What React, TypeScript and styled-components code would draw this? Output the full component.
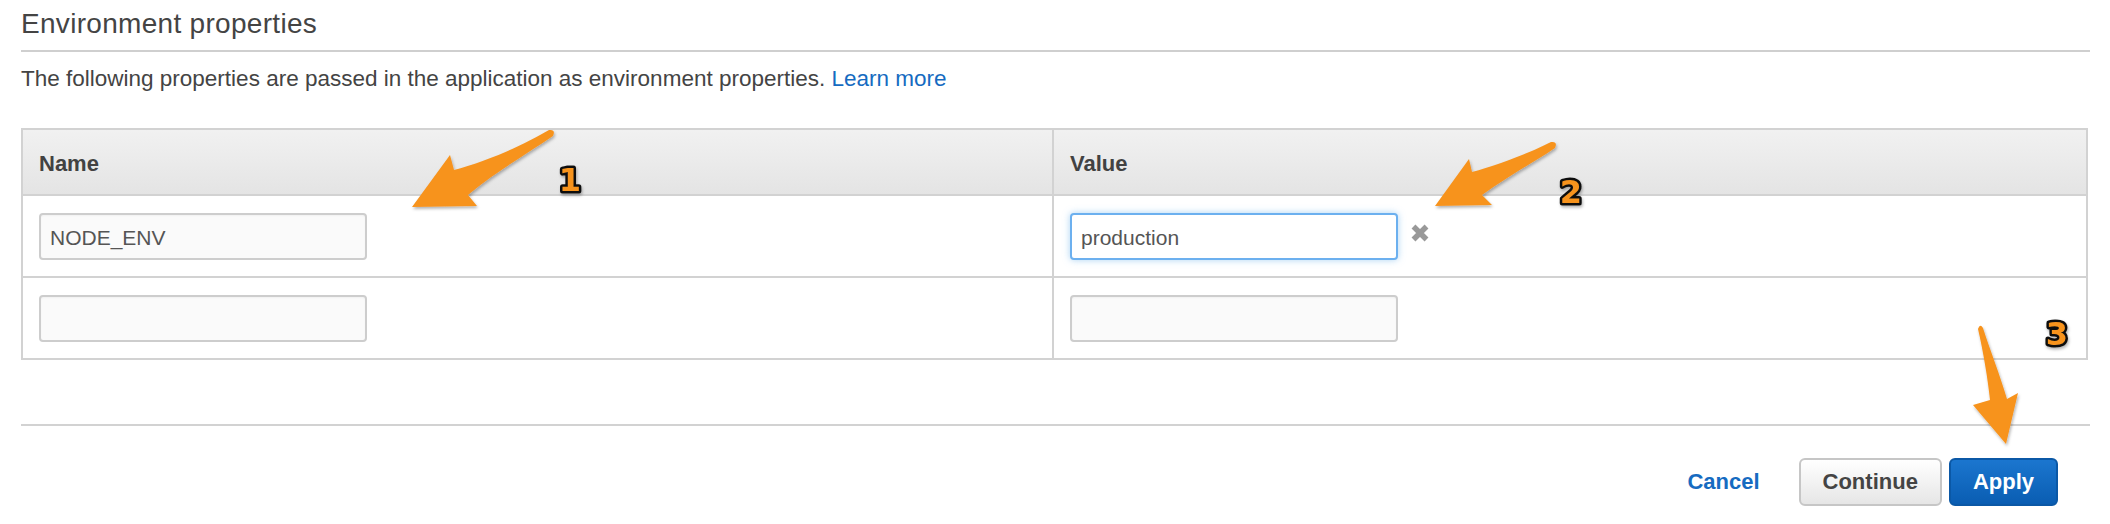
import * as React from "react";
import styled, { createGlobalStyle } from "styled-components";

const GlobalStyle = createGlobalStyle`
  html, body {
    margin: 0;
    padding: 0;
    background: #ffffff;
  }
  body {
    font-family: "Liberation Sans", Arial, Helvetica, sans-serif;
    color: #444444;
  }
  * {
    box-sizing: border-box;
  }
`;

const S = {
  Page: styled.div`
    position: relative;
    width: 2110px;
    height: 524px;
    padding: 0 20px 0 21px;
    overflow: hidden;
  `,
  Title: styled.h2`
    margin: 0;
    padding: 6px 0 8px;
    font-size: 28px;
    font-weight: 400;
    line-height: 36px;
    letter-spacing: 0.3px;
    color: #444444;
    border-bottom: 2px solid #cfcfcf;
  `,
  Description: styled.p`
    margin: 12px 0 0;
    font-size: 22.5px;
    line-height: 30px;
    color: #444444;
  `,
  Link: styled.a`
    color: #166bc1;
    text-decoration: none;
  `,
  Table: styled.div`
    display: grid;
    grid-template-columns: 1029px 1fr;
    margin: 34px 2px 0 0;
    border: 2px solid #d2d2d2;
  `,
  HeadCell: styled.div<{ $divider?: boolean }>`
    display: flex;
    align-items: center;
    height: 64px;
    padding: 3px 0 0 16px;
    background: linear-gradient(#f1f1f1, #e4e4e4);
    border-left: ${(p) => (p.$divider ? "2px solid #d2d2d2" : "none")};
    font-size: 22px;
    font-weight: 700;
    color: #424242;
  `,
  Cell: styled.div<{ $divider?: boolean }>`
    display: flex;
    align-items: center;
    height: 82px;
    padding: 1px 0 0 16px;
    border-top: 2px solid #d2d2d2;
    border-left: ${(p) => (p.$divider ? "2px solid #d2d2d2" : "none")};
  `,
  TextInput: styled.input<{ $focused?: boolean }>`
    width: 328px;
    height: 47px;
    padding: 2px 9px 0;
    border: 2px solid ${(p) => (p.$focused ? "#6cb0ef" : "#cdcdcd")};
    border-radius: 4px;
    background: ${(p) => (p.$focused ? "#ffffff" : "#fafafa")};
    box-shadow: ${(p) =>
      p.$focused
        ? "0 0 7px rgba(102, 175, 233, 0.55)"
        : "inset 0 1px 2px rgba(0, 0, 0, 0.04)"};
    font-family: "Liberation Sans", Arial, Helvetica, sans-serif;
    font-size: 21px;
    color: #555555;
    outline: none;
  `,
  Remove: styled.svg`
    width: 22px;
    height: 22px;
    margin: 0 0 8px 11px;
  `,
  Divider: styled.hr`
    margin: 64px 0 0;
    border: none;
    border-top: 2px solid #d2d2d2;
  `,
  Actions: styled.div`
    display: flex;
    justify-content: flex-end;
    align-items: center;
    padding: 32px 32px 0 0;
  `,
  LinkButton: styled.a`
    margin-right: 32px;
    font-size: 22px;
    font-weight: 700;
    color: #166bc1;
    text-decoration: none;
  `,
  Button: styled.button<{ $primary?: boolean }>`
    height: 48px;
    padding: 0 22px;
    margin-left: 7px;
    border-radius: 6px;
    border: 2px solid ${(p) => (p.$primary ? "#0b58a6" : "#c6c6c6")};
    background: ${(p) =>
      p.$primary
        ? "linear-gradient(#1b76cf, #0a5db2)"
        : "linear-gradient(#ffffff, #e6e6e6)"};
    font-family: "Liberation Sans", Arial, Helvetica, sans-serif;
    font-size: 22px;
    font-weight: 700;
    color: ${(p) => (p.$primary ? "#ffffff" : "#444444")};
  `,
  Annotations: styled.svg`
    position: absolute;
    top: 0;
    left: 0;
    width: 2110px;
    height: 524px;
    pointer-events: none;
  `,
};

const ORANGE = "#f7931e";

const arrows = [
  // 1 — points at the name input
  "M412 207 L450 155 L454 170 C480 163 515 150 549 130 Q556 129 553 136 C530 152 495 172 468 195 L477 206 Z",
  // 2 — points at the remove icon
  "M1435 206 L1469 159 L1472 172 C1495 166 1525 155 1551 142 Q1558 141 1555 148 C1533 163 1505 178 1482 195 L1492 205 Z",
  // 3 — points at the apply button
  "M2006 444 L1973 405 L1990 400 C1988 380 1983 350 1978 329 Q1980 323 1983 328 C1990 350 2000 375 2007 399 L2018 393 Z",
];

const badges = [
  { n: "1", x: 570, y: 191 },
  { n: "2", x: 1571, y: 203 },
  { n: "3", x: 2057, y: 345 },
];

const App: React.FC = () => {
  return (
    <>
      <GlobalStyle />
      <S.Page>
        <S.Title>Environment properties</S.Title>
        <S.Description>
          The following properties are passed in the application as environment
          properties. <S.Link href="#">Learn more</S.Link>
        </S.Description>

        <S.Table>
          <S.HeadCell>Name</S.HeadCell>
          <S.HeadCell $divider>Value</S.HeadCell>

          <S.Cell>
            <S.TextInput defaultValue="NODE_ENV" />
          </S.Cell>
          <S.Cell $divider>
            <S.TextInput $focused defaultValue="production" />
            <S.Remove viewBox="0 0 22 22">
              <path
                d="M4.5 4.5 L17.5 17.5 M17.5 4.5 L4.5 17.5"
                stroke="#999999"
                strokeWidth="5.5"
                strokeLinecap="butt"
              />
            </S.Remove>
          </S.Cell>

          <S.Cell>
            <S.TextInput />
          </S.Cell>
          <S.Cell $divider>
            <S.TextInput />
          </S.Cell>
        </S.Table>

        <S.Divider />

        <S.Actions>
          <S.LinkButton href="#">Cancel</S.LinkButton>
          <S.Button>Continue</S.Button>
          <S.Button $primary>Apply</S.Button>
        </S.Actions>

        <S.Annotations viewBox="0 0 2110 524">
          <defs>
            <filter id="shade" x="-20%" y="-20%" width="140%" height="140%">
              <feDropShadow
                dx="1"
                dy="2"
                stdDeviation="1.5"
                floodColor="#000"
                floodOpacity="0.3"
              />
            </filter>
          </defs>
          {arrows.map((d, i) => (
            <path key={i} d={d} fill={ORANGE} filter="url(#shade)" />
          ))}
          {badges.map((b) => (
            <text
              key={b.n}
              x={b.x}
              y={b.y}
              textAnchor="middle"
              fontFamily='"DejaVu Sans", sans-serif'
              fontWeight="700"
              fontSize="32"
              fill={ORANGE}
              stroke="#111"
              strokeWidth="5"
              strokeLinejoin="round"
              paintOrder="stroke"
              filter="url(#shade)"
            >
              {b.n}
            </text>
          ))}
        </S.Annotations>
      </S.Page>
    </>
  );
};

export default App;
